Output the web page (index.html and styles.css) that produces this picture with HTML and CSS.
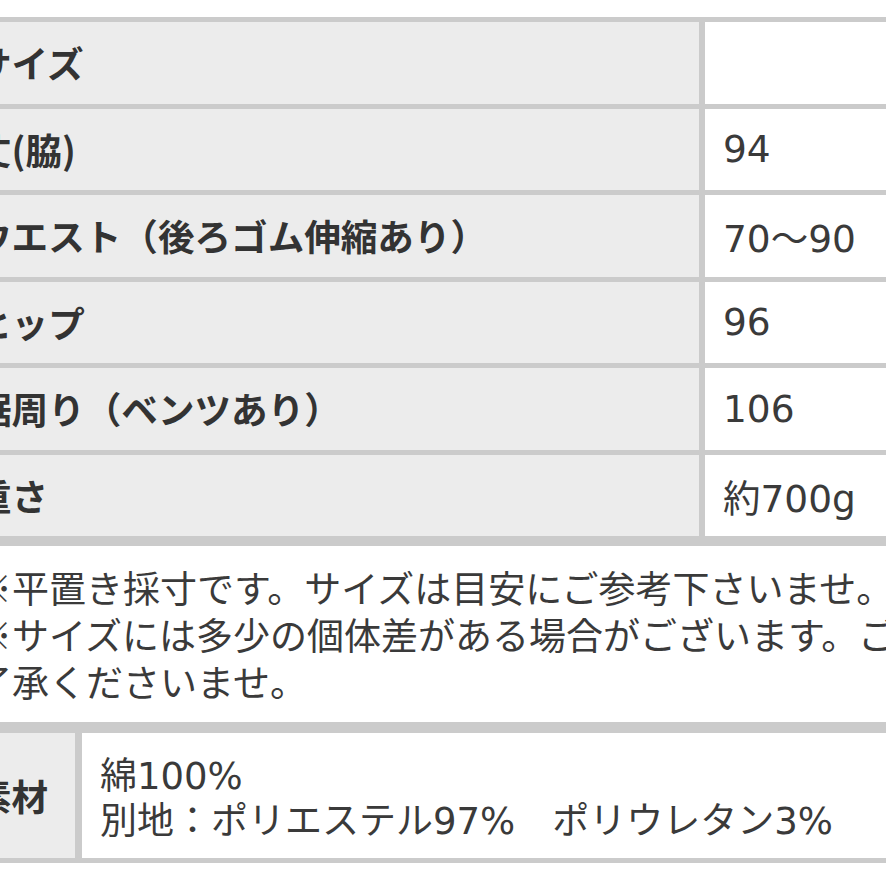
FILE: index.html
```html
<!DOCTYPE html>
<html lang="ja">
<head>
<meta charset="utf-8">
<link rel="stylesheet" href="styles.css">
</head>
<body>
<div class="page">
  <div class="spec">
    <div class="label">サイズ</div><div class="value"></div>
    <div class="label">丈(脇)</div><div class="value num">94</div>
    <div class="label">ウエスト（後ろゴム伸縮あり）</div><div class="value num">70〜90</div>
    <div class="label">ヒップ</div><div class="value num">96</div>
    <div class="label">裾周り（ベンツあり）</div><div class="value num">106</div>
    <div class="label">重さ</div><div class="value num">約700g</div>
  </div>
  <p class="notes">※平置き採寸です。サイズは目安にご参考下さいませ。<br>※サイズには多少の個体差がある場合がございます。ご<br>了承くださいませ。</p>
  <div class="material">
    <div class="mat-label">素材</div>
    <div class="mat-value num">綿100%<br>別地：ポリエステル97%　ポリウレタン3%</div>
  </div>
</div>
</body>
</html>
```
FILE: styles.css
```css
html, body {
  margin: 0;
  padding: 0;
  background: #ffffff;
  overflow: hidden;
}
body {
  width: 886px;
  height: 886px;
  font-family: "Noto Sans CJK JP", "Noto Sans", sans-serif;
  color: #333333;
}
.page {
  margin-left: -42px;
  width: 1000px;
  padding-top: 17px;
}
.spec {
  display: grid;
  grid-template-columns: 736px 240px;
  grid-auto-rows: 81.5px;
  gap: 5px 6px;
  padding: 5px 5px 10px;
  background: #cbcbcb;
}
.label {
  background: #ececec;
  display: flex;
  align-items: center;
  padding-left: 12px;
  font-size: 36.6px;
  font-weight: bold;
  color: #333333;
  white-space: nowrap;
}
.value {
  background: #ffffff;
  display: flex;
  align-items: center;
  padding-left: 18px;
  font-size: 37.5px;
  color: #3a3a3a;
  white-space: nowrap;
}
.num {
  font-family: "DejaVu Sans", "Noto Sans CJK JP", sans-serif;
}
.notes {
  margin: 18px 0 17px 17px;
  font-size: 37px;
  line-height: 47px;
  color: #3a3a3a;
  white-space: nowrap;
}
.material {
  display: grid;
  grid-template-columns: 112px 900px;
  gap: 0 7px;
  padding: 11px 5px 5px;
  background: #cbcbcb;
}
.mat-label {
  background: #ececec;
  display: flex;
  align-items: center;
  padding-left: 12px;
  font-size: 36.6px;
  font-weight: bold;
  color: #333333;
  white-space: nowrap;
}
.mat-value {
  background: #ffffff;
  padding: 21px 18px 14px;
  font-size: 37px;
  line-height: 45px;
  color: #3a3a3a;
  white-space: nowrap;
}
```
